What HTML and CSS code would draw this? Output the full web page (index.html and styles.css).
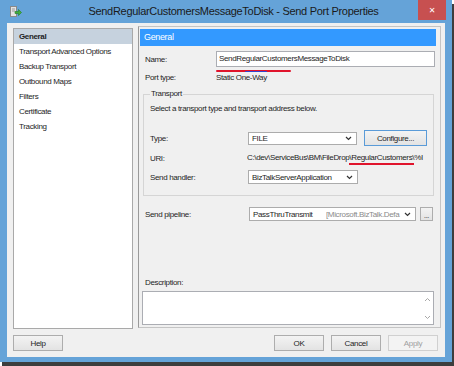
FILE: index.html
```html
<!DOCTYPE html>
<html>
<head>
  <meta charset="UTF-8">
  <link rel="stylesheet" href="styles.css">
</head>
<body>
  <div class="window">
    <div class="titlebar">
      <svg class="app-icon" width="13" height="13" viewBox="0 0 13 13">
        <rect x="1.5" y="1.5" width="6" height="10" fill="#e4e4e4" stroke="#8a8a8a"/>
        <line x1="3" y1="4" x2="6" y2="4" stroke="#9a9a9a"/>
        <line x1="3" y1="6" x2="6" y2="6" stroke="#9a9a9a"/>
        <path d="M6 6.5h3.5V4.5l3 3-3 3V8.5H6z" fill="#3fae3a" stroke="#2a7d27" stroke-width="0.6"/>
      </svg>
      <div class="title">SendRegularCustomersMessageToDisk - Send Port Properties</div>
      <button class="close-btn">&#10005;</button>
    </div>

    <div class="client">
      <div class="main">
        <ul class="nav">
          <li class="active">General</li>
          <li>Transport Advanced Options</li>
          <li>Backup Transport</li>
          <li>Outbound Maps</li>
          <li>Filters</li>
          <li>Certificate</li>
          <li>Tracking</li>
        </ul>

        <div class="panel">
          <div class="panel-head">General</div>
          <div class="form">
            <div class="row row-name">
              <span class="label label-name">Name:</span>
              <div class="textbox">
                SendRegularCustomersMessageToDisk
                <span class="pen pen-name"></span>
              </div>
            </div>
            <div class="row row-porttype">
              <span class="label label-name">Port type:</span>
              <span class="value">Static One-Way<span class="pen pen-blue"></span></span>
            </div>

            <fieldset class="group">
              <legend>Transport</legend>
              <div class="hint">Select a transport type and transport address below.</div>
              <div class="row row-type">
                <span class="label label-inner">Type:</span>
                <div class="select select-type">
                  <span>FILE</span>
                  <svg width="7" height="5" viewBox="0 0 7 5"><path d="M1 1l2.5 2.5L6 1" fill="none" stroke="#333" stroke-width="1.2"/></svg>
                </div>
                <button class="btn btn-configure">Configure...</button>
              </div>
              <div class="row row-uri">
                <span class="label label-uri">URI:</span>
                <span class="uri">C:\dev\ServiceBus\BM\FileDrop<span class="underlined">\RegularCustomers\</span>%I</span>
              </div>
              <div class="row row-handler">
                <span class="label label-inner">Send handler:</span>
                <div class="select select-handler">
                  <span>BizTalkServerApplication</span>
                  <svg width="7" height="5" viewBox="0 0 7 5"><path d="M1 1l2.5 2.5L6 1" fill="none" stroke="#333" stroke-width="1.2"/></svg>
                </div>
              </div>
            </fieldset>

            <div class="row row-pipeline">
              <span class="label label-pipeline">Send pipeline:</span>
              <div class="select select-pipeline">
                <span class="pipe-name">PassThruTransmit</span>
                <span class="pipe-asm">[Microsoft.BizTalk.Defa</span>
                <svg width="7" height="5" viewBox="0 0 7 5"><path d="M1 1l2.5 2.5L6 1" fill="none" stroke="#333" stroke-width="1.2"/></svg>
              </div>
              <button class="btn btn-dots">...</button>
            </div>

            <div class="desc-label">Description:</div>
            <div class="desc-box">
              <div class="desc-text"></div>
              <div class="scroll">
                <svg width="7" height="5" viewBox="0 0 7 5"><path d="M1 4l2.5-2.5L6 4" fill="none" stroke="#a8a8a8" stroke-width="1"/></svg>
                <svg width="7" height="5" viewBox="0 0 7 5"><path d="M1 1l2.5 2.5L6 1" fill="none" stroke="#a8a8a8" stroke-width="1"/></svg>
              </div>
            </div>
          </div>
        </div>
      </div>

      <div class="footer">
        <button class="btn btn-footer">Help</button>
        <div class="footer-right">
          <button class="btn btn-footer">OK</button>
          <button class="btn btn-footer">Cancel</button>
          <button class="btn btn-footer btn-disabled">Apply</button>
        </div>
      </div>
    </div>
  </div>
</body>
</html>
```

FILE: styles.css
```css
body {
  margin: 0;
  width: 454px;
  height: 366px;
  background: #fff;
  font-family: "Liberation Sans", Arial, sans-serif;
  font-size: 8px;
  letter-spacing: -0.35px;
  color: #1e1e1e;
  overflow: hidden;
}
.window {
  width: 452px;
  height: 362px;
  box-sizing: border-box;
  background: #65a3d8;
  padding: 0 7px 5px 7px;
  box-shadow: 2px 4px 0 #3d3d3d;
  display: flex;
  flex-direction: column;
}
.titlebar {
  height: 23px;
  display: flex;
  align-items: flex-start;
  flex-shrink: 0;
}
.app-icon {
  margin: 5px 0 0 2px;
}
.title {
  flex: 1;
  padding-left: 27px;
  text-align: center;
  font-size: 11px;
  letter-spacing: -0.3px;
  line-height: 23px;
  color: #1a1a1a;
  white-space: nowrap;
}
.close-btn {
  width: 28px;
  height: 20px;
  margin-right: -1px;
  border: none;
  padding: 0;
  background: #c75050;
  color: #fff;
  font-size: 8px;
  font-weight: bold;
  font-family: "DejaVu Sans", sans-serif;
}
.client {
  flex: 1;
  background: #f0f0f0;
  display: flex;
  flex-direction: column;
  padding: 3px 7px 6px 6px;
}
.main {
  display: flex;
  align-items: flex-start;
  gap: 5px;
  height: 303px;
}
.nav {
  list-style: none;
  margin: 2px 0 0 0;
  padding: 0;
  width: 120px;
  height: 301px;
  box-sizing: border-box;
  border: 1px solid #a9a9a9;
  background: #fff;
}
.nav li {
  height: 15px;
  line-height: 15px;
  padding-left: 5px;
  white-space: nowrap;
}
.nav li.active {
  background: #c6d2de;
  font-weight: bold;
}
.panel {
  width: 303px;
  height: 302px;
  margin-right: -3px;
  box-sizing: border-box;
  border: 1px solid #c4c4c4;
  border-left-color: #9a9a9a;
  padding: 2px 4px 0 1px;
}
.panel-head {
  height: 17px;
  line-height: 17px;
  background: #3399ff;
  color: #fff;
  font-size: 9px;
  padding-left: 4px;
}
.form {
  padding: 0 1px 0 3px;
}
.row {
  display: flex;
  align-items: center;
}
.label {
  flex-shrink: 0;
  white-space: nowrap;
}
.row-name {
  margin-top: 5px;
  padding-left: 2px;
}
.label-name {
  width: 71px;
}
.textbox {
  position: relative;
  width: 219px;
  height: 16px;
  box-sizing: border-box;
  border: 1px solid #abadb3;
  background: #fff;
  line-height: 14px;
  padding-left: 2px;
  white-space: nowrap;
}
.pen {
  position: absolute;
  border-radius: 1px;
}
.pen-name {
  left: -1px;
  top: 18px;
  width: 75px;
  height: 2px;
  background: #e0142c;
}
.row-porttype {
  margin-top: 4px;
  padding-left: 2px;
  height: 12px;
}
.value {
  position: relative;
}
.pen-blue {
  left: 29px;
  top: -2px;
  width: 22px;
  height: 1px;
  background: #3344cc;
}
.group {
  margin: 6px 1px 0 0;
  padding: 0 0 11px 6px;
  border: 1px solid #d5d5d5;
}
.group legend {
  padding: 0 1px;
  line-height: 10px;
}
.hint {
  margin-top: 4px;
  line-height: 12px;
}
.label-inner {
  width: 98px;
}
.label-uri {
  width: 97px;
}
.row-type {
  margin-top: 15px;
  height: 16px;
}
.select {
  display: flex;
  align-items: center;
  box-sizing: border-box;
  border: 1px solid #acacac;
  background: #fff;
  padding: 0 4px 0 3px;
  white-space: nowrap;
  overflow: hidden;
}
.select span {
  flex: 1;
}
.select svg {
  flex-shrink: 0;
}
.select-type {
  width: 109px;
  height: 13px;
}
.btn {
  font-family: inherit;
  font-size: 8px;
  letter-spacing: -0.35px;
  color: #1e1e1e;
  border: 1px solid #adadad;
  background: linear-gradient(#f3f3f3, #e3e3e3);
  padding: 0;
}
.btn-configure {
  width: 63px;
  height: 16px;
  margin-left: 7px;
  border-color: #5a9bd8;
}
.row-uri {
  margin-top: 6px;
  height: 12px;
}
.uri {
  white-space: nowrap;
  overflow-x: clip;
  width: 183px;
  line-height: 12px;
}
.underlined {
  border-bottom: 2px solid #e0142c;
  padding-bottom: 1px;
}
.row-handler {
  margin-top: 6px;
  height: 14px;
}
.select-handler {
  width: 110px;
  height: 14px;
}
.row-pipeline {
  margin-top: 11px;
  height: 14px;
  padding-left: 2px;
}
.label-pipeline {
  width: 104px;
}
.select-pipeline {
  width: 167px;
  height: 14px;
}
.select-pipeline .pipe-name {
  flex: none;
  width: 73px;
}
.select-pipeline .pipe-asm {
  color: #8a8a8a;
  overflow: hidden;
}
.btn-dots {
  width: 13px;
  height: 14px;
  margin-left: 4px;
  line-height: 16px;
  font-size: 7px;
}
.desc-label {
  margin-top: 56px;
  padding-left: 2px;
  line-height: 12px;
}
.desc-box {
  display: flex;
  margin: 2px 0 0 -1px;
  width: 292px;
  height: 34px;
  box-sizing: border-box;
  border: 1px solid #abadb3;
  background: #fff;
}
.desc-text {
  flex: 1;
}
.scroll {
  width: 11px;
  display: flex;
  flex-direction: column;
  justify-content: space-between;
  align-items: center;
  padding: 5px 0 4px;
}
.footer {
  display: flex;
  margin-top: 6px;
}
.footer-right {
  display: flex;
  gap: 7px;
  margin-left: auto;
}
.btn-footer {
  width: 50px;
  height: 16px;
}
.btn-disabled {
  color: #a0a0a0;
  border-color: #d0d0d0;
  background: #f3f3f3;
}
```
